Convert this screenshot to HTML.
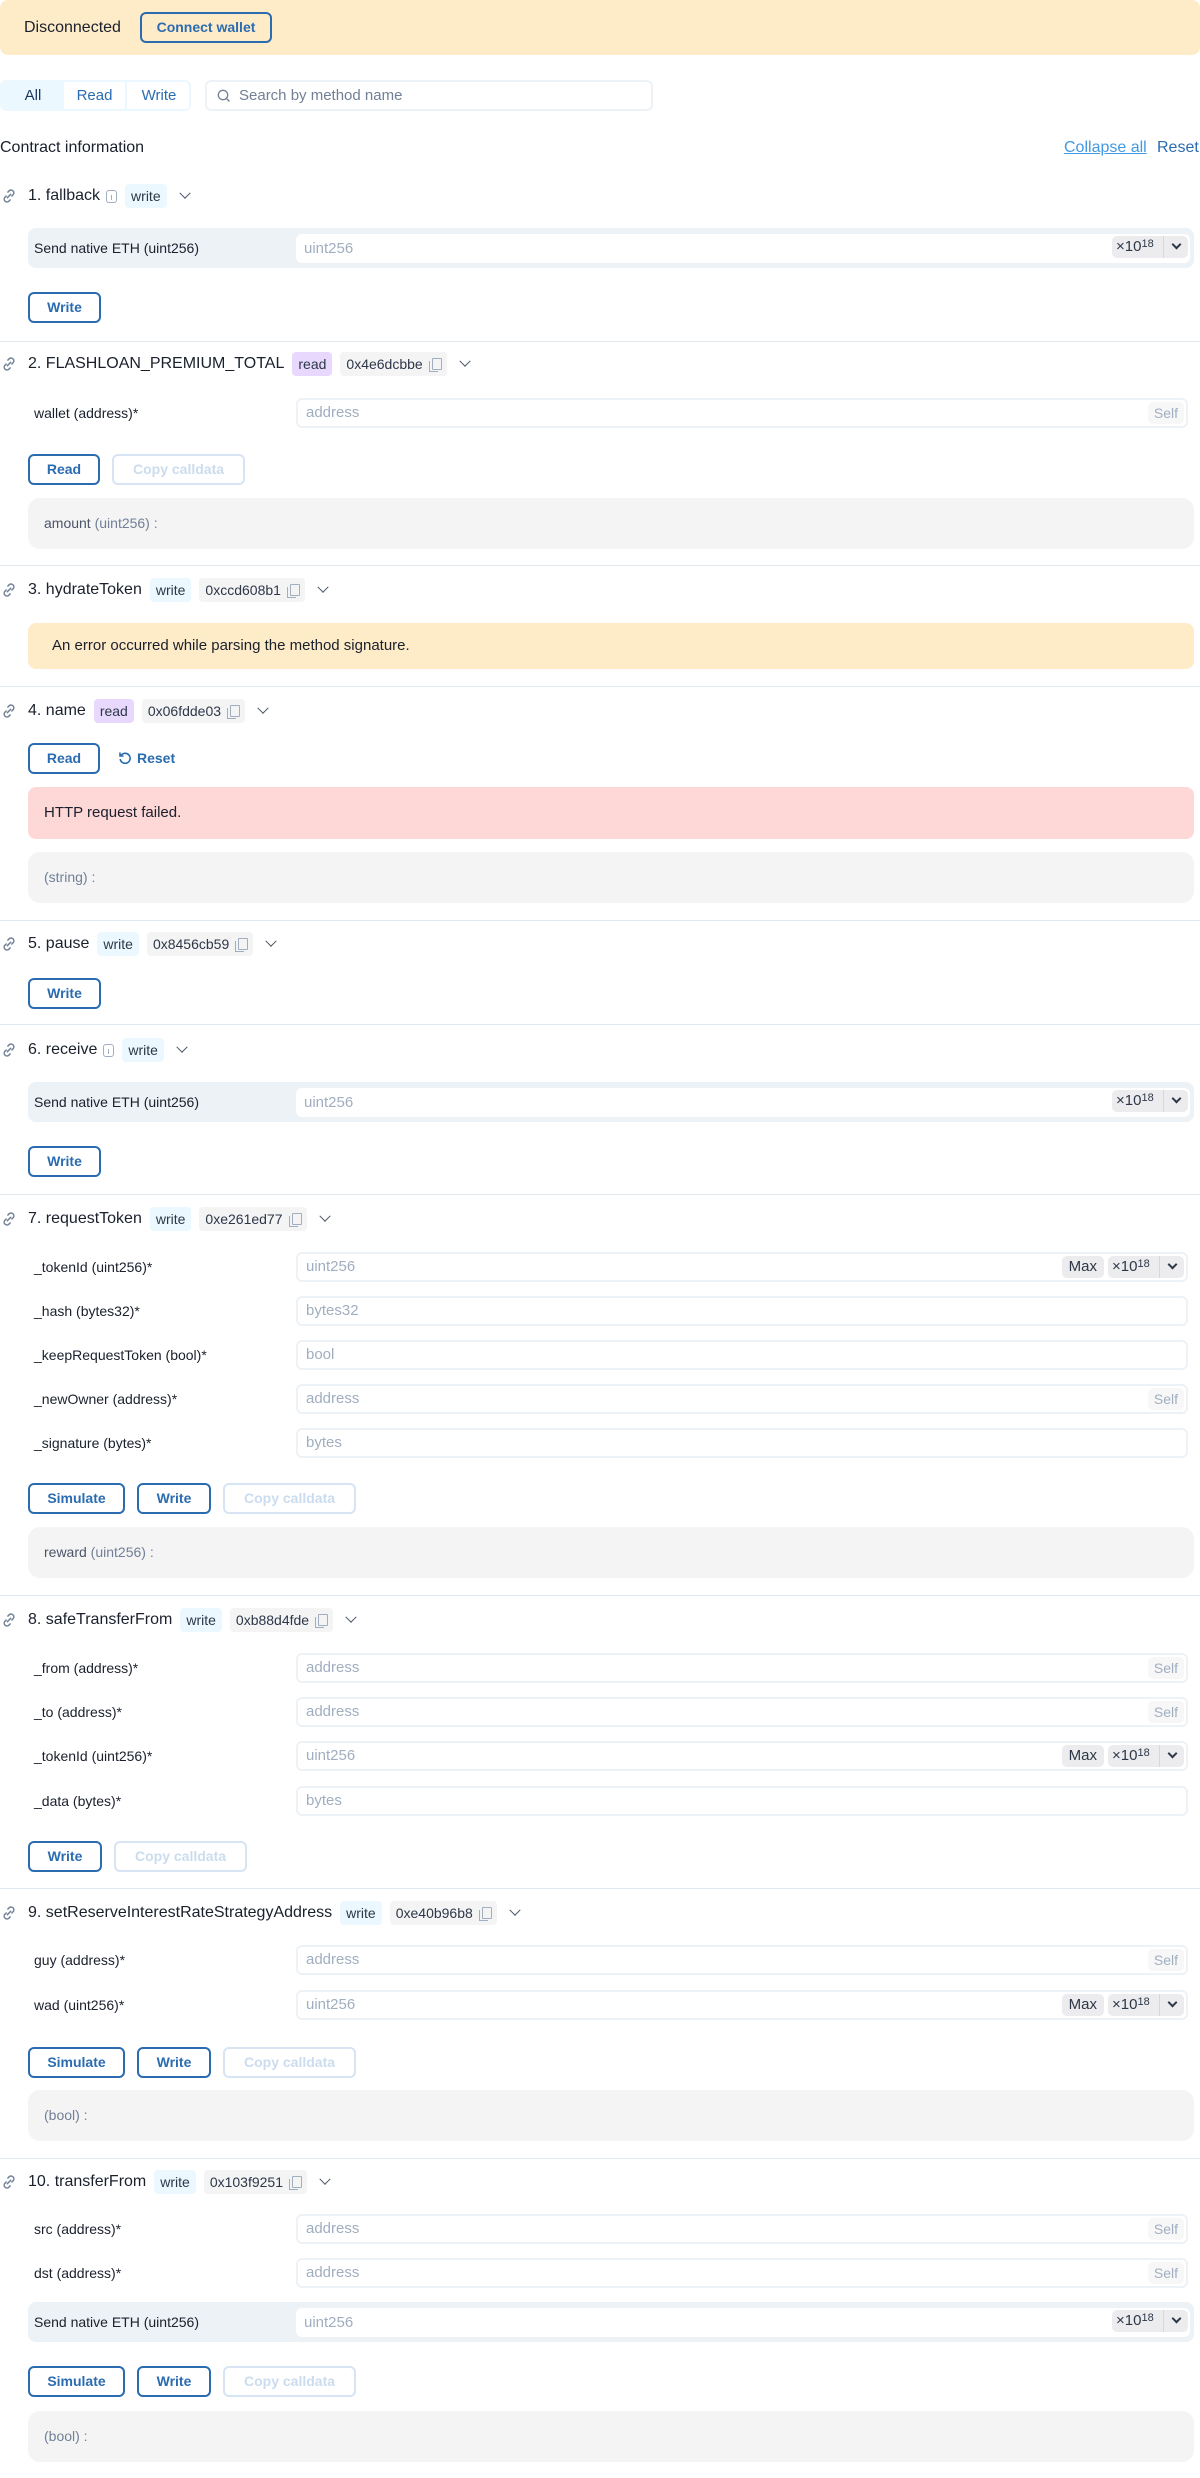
<!DOCTYPE html>
<html><head><meta charset="utf-8">
<style>
*{box-sizing:border-box;margin:0;padding:0}
body{width:1200px;height:2478px;position:relative;background:#fff;font-family:"Liberation Sans",sans-serif;color:#1a202c;overflow:hidden}
.a{position:absolute}
.banner{left:0;top:0;width:1200px;height:55px;background:#feebc8;border-radius:8px}
.cw{left:140px;top:12px;width:132px;height:31px;border:2px solid #2b6cb0;border-radius:6px;color:#2b6cb0;font-size:14px;font-weight:bold;text-align:center;line-height:27px}
.tabs{left:0;top:80px;width:191px;height:31px;border:2px solid #ebf8ff;border-radius:6px;overflow:hidden;font-size:15px;color:#2b6cb0}
.tabs span{position:absolute;top:0;height:27px;line-height:27px;text-align:center}
.search{left:205px;top:80px;width:448px;height:31px;border:2px solid #edf2f7;border-radius:6px;color:#718096;font-size:15px;line-height:27px;padding-left:32px}
.hdr{left:0;height:26px;display:flex;align-items:center;font-size:16px;white-space:nowrap}
.hdr .t{margin-left:10px;font-weight:normal;color:#1a202c}
.bw,.br{margin-left:8px;height:24px;line-height:24px;padding:0 6px;border-radius:4px;font-size:14px;color:#2d3748}
.bw{background:#ebf8ff}.br{background:#e9d8fd}
.ad{margin-left:8px;height:24px;line-height:24px;padding:0 6px;border-radius:4px;background:#f4f4f5;font-size:14px;color:#2d3748;display:flex;align-items:center}
.cp{margin-left:6px;width:12px;height:13px;position:relative}
.cp:before{content:"";position:absolute;left:3px;top:0;width:8px;height:10px;border:1.5px solid #a0aec0;border-radius:1px}
.cp:after{content:"";position:absolute;left:0;top:3px;width:8px;height:10px;border-left:1.5px solid #a0aec0;border-bottom:1.5px solid #a0aec0;}
.ch{margin-left:14px;width:8px;height:8px;border-right:1.5px solid #4a5568;border-bottom:1.5px solid #4a5568;transform:rotate(45deg) translate(-2px,-2px)}
.info{margin-left:6px;width:11px;height:13px;border:1.2px solid #a0aec0;border-radius:3px;position:relative}
.info:after{content:"";position:absolute;left:3.5px;top:4px;width:1.3px;height:5px;background:#a0aec0}
.lbl{left:34px;font-size:14px;color:#1a202c;height:30px;line-height:30px}
.inp{left:296px;width:892px;height:30px;border:2px solid #edf2f7;border-radius:6px;font-size:15px;color:#a0aec0;line-height:26px;padding-left:8px}
.self{position:absolute;right:2px;top:2px;height:22px;line-height:22px;padding:0 6px;border-radius:5px;background:#f7f7f8;color:#a0aec0;font-size:14px}
.exp{position:absolute;right:2px;top:2px;height:22px;width:76px;line-height:22px;border-radius:5px;background:#ececee;color:#2d3748;font-size:15px;padding-left:4px}
.exp sup{font-size:11px;position:relative;top:-4px;vertical-align:baseline}
.exp i{position:absolute;right:8px;top:5px;width:7px;height:7px;border-right:2px solid #2d3748;border-bottom:2px solid #2d3748;transform:rotate(45deg)}
.exp b{position:absolute;right:24px;top:0;width:1px;height:22px;background:#d8d8dc}
.max{position:absolute;right:82px;top:2px;height:22px;line-height:22px;padding:0 7px;border-radius:5px;background:#ececee;color:#2d3748;font-size:15px}
.nat{left:28px;width:1166px;height:40px;background:#edf2f7;border-radius:8px}
.nat .l{position:absolute;left:6px;top:0;line-height:40px;font-size:14px}
.nat .in{position:absolute;left:268px;top:6px;width:894px;height:29px;background:#fff;border-radius:6px;color:#a0aec0;font-size:15px;line-height:29px;padding-left:8px}
.btn{height:31px;border:2px solid #2b6cb0;border-radius:6px;color:#2b6cb0;font-size:14px;font-weight:bold;text-align:center;line-height:27px}
.dis{border-color:#d6e4f3;color:#cbdcee}
.res{left:28px;width:1166px;height:51px;background:#f4f4f5;border-radius:12px;font-size:14px;color:#718096;line-height:51px;padding-left:16px}
.sep{left:0;width:1200px;height:1px;background:#e2e8f0}
.warn{left:28px;width:1166px;height:46px;background:#feebc8;border-radius:8px;font-size:15px;line-height:46px;padding-left:24px;color:#1a202c}
.err{left:28px;width:1166px;height:52px;background:#fed7d7;border-radius:8px;font-size:15px;line-height:52px;padding-left:16px;color:#1a202c}
</style></head><body>
<svg width="0" height="0" style="position:absolute"><defs><symbol id="lk" viewBox="0 0 16 16"><path d="M6.5 9.5l3-3M7 4.5l1.3-1.3a2.5 2.5 0 013.5 3.5L10.5 8M9 11.5l-1.3 1.3a2.5 2.5 0 01-3.5-3.5L5.5 8" fill="none" stroke="#718096" stroke-width="1.3" stroke-linecap="round"/></symbol></defs></svg>

<div class="a banner"></div>
<div class="a" style="left:24px;top:19px;font-size:16px">Disconnected</div>
<div class="a cw">Connect wallet</div>

<div class="a tabs"><span style="left:0;width:62px;background:#ebf8ff;color:#1a365d">All</span><span style="left:62px;width:63px;border-right:2px solid #ebf8ff">Read</span><span style="left:127px;width:60px">Write</span></div>
<div class="a search"><svg class="a" style="left:10px;top:7px" width="14" height="14" viewBox="0 0 14 14"><circle cx="6" cy="6" r="4.7" fill="none" stroke="#718096" stroke-width="1.3"/><path d="M9.5 9.5l3 3" stroke="#718096" stroke-width="1.3"/></svg>Search by method name</div>

<div class="a" style="left:0;top:139px;font-size:16px">Contract information</div>
<div class="a" style="left:1064px;top:139px;font-size:16px;color:#4299e1;text-decoration:underline">Collapse all</div>
<div class="a" style="left:1157px;top:139px;font-size:16px;color:#2b6cb0">Reset</div>

<!-- 1 -->
<div class="a hdr" style="top:183px"><svg width="18" height="18"><use href="#lk"/></svg><span class="t">1. fallback</span><span class="info"></span><span class="bw">write</span><span class="ch"></span></div>
<div class="a nat" style="top:228px"><span class="l">Send native ETH (uint256)</span><div class="in">uint256<div class="exp"><b></b>×10<sup>18</sup><i></i></div></div></div>
<div class="a btn" style="left:28px;top:292px;width:73px">Write</div>
<div class="a sep" style="top:341px"></div>

<!-- 2 -->
<div class="a hdr" style="top:351px"><svg width="18" height="18"><use href="#lk"/></svg><span class="t">2. FLASHLOAN_PREMIUM_TOTAL</span><span class="br">read</span><span class="ad">0x4e6dcbbe<span class="cp"></span></span><span class="ch"></span></div>
<div class="a lbl" style="top:398px">wallet (address)*</div>
<div class="a inp" style="top:398px">address<span class="self">Self</span></div>
<div class="a btn" style="left:28px;top:454px;width:72px">Read</div>
<div class="a btn dis" style="left:112px;top:454px;width:133px">Copy calldata</div>
<div class="a res" style="top:498px"><span style="color:#4a5568">amount</span> (uint256) :</div>
<div class="a sep" style="top:565px"></div>

<!-- 3 -->
<div class="a hdr" style="top:577px"><svg width="18" height="18"><use href="#lk"/></svg><span class="t">3. hydrateToken</span><span class="bw">write</span><span class="ad">0xccd608b1<span class="cp"></span></span><span class="ch"></span></div>
<div class="a warn" style="top:623px">An error occurred while parsing the method signature.</div>
<div class="a sep" style="top:686px"></div>

<!-- 4 -->
<div class="a hdr" style="top:698px"><svg width="18" height="18"><use href="#lk"/></svg><span class="t">4. name</span><span class="br">read</span><span class="ad">0x06fdde03<span class="cp"></span></span><span class="ch"></span></div>
<div class="a btn" style="left:28px;top:743px;width:72px">Read</div>
<div class="a" style="left:118px;top:750px;font-size:14px;font-weight:bold;color:#2b6cb0"><svg width="14" height="14" viewBox="0 0 14 14" style="vertical-align:-2px;margin-right:5px"><path d="M3 4.5A5 5 0 1 1 2.2 8" fill="none" stroke="#2b6cb0" stroke-width="1.6"/><path d="M2 1.5v3.5h3.5" fill="none" stroke="#2b6cb0" stroke-width="1.6"/></svg>Reset</div>
<div class="a err" style="top:787px">HTTP request failed.</div>
<div class="a res" style="top:852px">(string) :</div>
<div class="a sep" style="top:920px"></div>

<!-- 5 -->
<div class="a hdr" style="top:931px"><svg width="18" height="18"><use href="#lk"/></svg><span class="t">5. pause</span><span class="bw">write</span><span class="ad">0x8456cb59<span class="cp"></span></span><span class="ch"></span></div>
<div class="a btn" style="left:28px;top:978px;width:73px">Write</div>
<div class="a sep" style="top:1024px"></div>

<!-- 6 -->
<div class="a hdr" style="top:1037px"><svg width="18" height="18"><use href="#lk"/></svg><span class="t">6. receive</span><span class="info"></span><span class="bw">write</span><span class="ch"></span></div>
<div class="a nat" style="top:1082px"><span class="l">Send native ETH (uint256)</span><div class="in">uint256<div class="exp"><b></b>×10<sup>18</sup><i></i></div></div></div>
<div class="a btn" style="left:28px;top:1146px;width:73px">Write</div>
<div class="a sep" style="top:1194px"></div>

<!-- 7 -->
<div class="a hdr" style="top:1206px"><svg width="18" height="18"><use href="#lk"/></svg><span class="t">7. requestToken</span><span class="bw">write</span><span class="ad">0xe261ed77<span class="cp"></span></span><span class="ch"></span></div>
<div class="a lbl" style="top:1252px">_tokenId (uint256)*</div>
<div class="a inp" style="top:1252px">uint256<span class="max">Max</span><div class="exp"><b></b>×10<sup>18</sup><i></i></div></div>
<div class="a lbl" style="top:1296px">_hash (bytes32)*</div>
<div class="a inp" style="top:1296px">bytes32</div>
<div class="a lbl" style="top:1340px">_keepRequestToken (bool)*</div>
<div class="a inp" style="top:1340px">bool</div>
<div class="a lbl" style="top:1384px">_newOwner (address)*</div>
<div class="a inp" style="top:1384px">address<span class="self">Self</span></div>
<div class="a lbl" style="top:1428px">_signature (bytes)*</div>
<div class="a inp" style="top:1428px">bytes</div>
<div class="a btn" style="left:28px;top:1483px;width:97px">Simulate</div>
<div class="a btn" style="left:137px;top:1483px;width:74px">Write</div>
<div class="a btn dis" style="left:223px;top:1483px;width:133px">Copy calldata</div>
<div class="a res" style="top:1527px"><span style="color:#4a5568">reward</span> (uint256) :</div>
<div class="a sep" style="top:1595px"></div>

<!-- 8 -->
<div class="a hdr" style="top:1607px"><svg width="18" height="18"><use href="#lk"/></svg><span class="t">8. safeTransferFrom</span><span class="bw">write</span><span class="ad">0xb88d4fde<span class="cp"></span></span><span class="ch"></span></div>
<div class="a lbl" style="top:1653px">_from (address)*</div>
<div class="a inp" style="top:1653px">address<span class="self">Self</span></div>
<div class="a lbl" style="top:1697px">_to (address)*</div>
<div class="a inp" style="top:1697px">address<span class="self">Self</span></div>
<div class="a lbl" style="top:1741px">_tokenId (uint256)*</div>
<div class="a inp" style="top:1741px">uint256<span class="max">Max</span><div class="exp"><b></b>×10<sup>18</sup><i></i></div></div>
<div class="a lbl" style="top:1786px">_data (bytes)*</div>
<div class="a inp" style="top:1786px">bytes</div>
<div class="a btn" style="left:28px;top:1841px;width:74px">Write</div>
<div class="a btn dis" style="left:114px;top:1841px;width:133px">Copy calldata</div>
<div class="a sep" style="top:1888px"></div>

<!-- 9 -->
<div class="a hdr" style="top:1900px"><svg width="18" height="18"><use href="#lk"/></svg><span class="t">9. setReserveInterestRateStrategyAddress</span><span class="bw">write</span><span class="ad">0xe40b96b8<span class="cp"></span></span><span class="ch"></span></div>
<div class="a lbl" style="top:1945px">guy (address)*</div>
<div class="a inp" style="top:1945px">address<span class="self">Self</span></div>
<div class="a lbl" style="top:1990px">wad (uint256)*</div>
<div class="a inp" style="top:1990px">uint256<span class="max">Max</span><div class="exp"><b></b>×10<sup>18</sup><i></i></div></div>
<div class="a btn" style="left:28px;top:2047px;width:97px">Simulate</div>
<div class="a btn" style="left:137px;top:2047px;width:74px">Write</div>
<div class="a btn dis" style="left:223px;top:2047px;width:133px">Copy calldata</div>
<div class="a res" style="top:2090px">(bool) :</div>
<div class="a sep" style="top:2158px"></div>

<!-- 10 -->
<div class="a hdr" style="top:2169px"><svg width="18" height="18"><use href="#lk"/></svg><span class="t">10. transferFrom</span><span class="bw">write</span><span class="ad">0x103f9251<span class="cp"></span></span><span class="ch"></span></div>
<div class="a lbl" style="top:2214px">src (address)*</div>
<div class="a inp" style="top:2214px">address<span class="self">Self</span></div>
<div class="a lbl" style="top:2258px">dst (address)*</div>
<div class="a inp" style="top:2258px">address<span class="self">Self</span></div>
<div class="a nat" style="top:2302px"><span class="l">Send native ETH (uint256)</span><div class="in">uint256<div class="exp"><b></b>×10<sup>18</sup><i></i></div></div></div>
<div class="a btn" style="left:28px;top:2366px;width:97px">Simulate</div>
<div class="a btn" style="left:137px;top:2366px;width:74px">Write</div>
<div class="a btn dis" style="left:223px;top:2366px;width:133px">Copy calldata</div>
<div class="a res" style="top:2411px">(bool) :</div>
</body></html>
